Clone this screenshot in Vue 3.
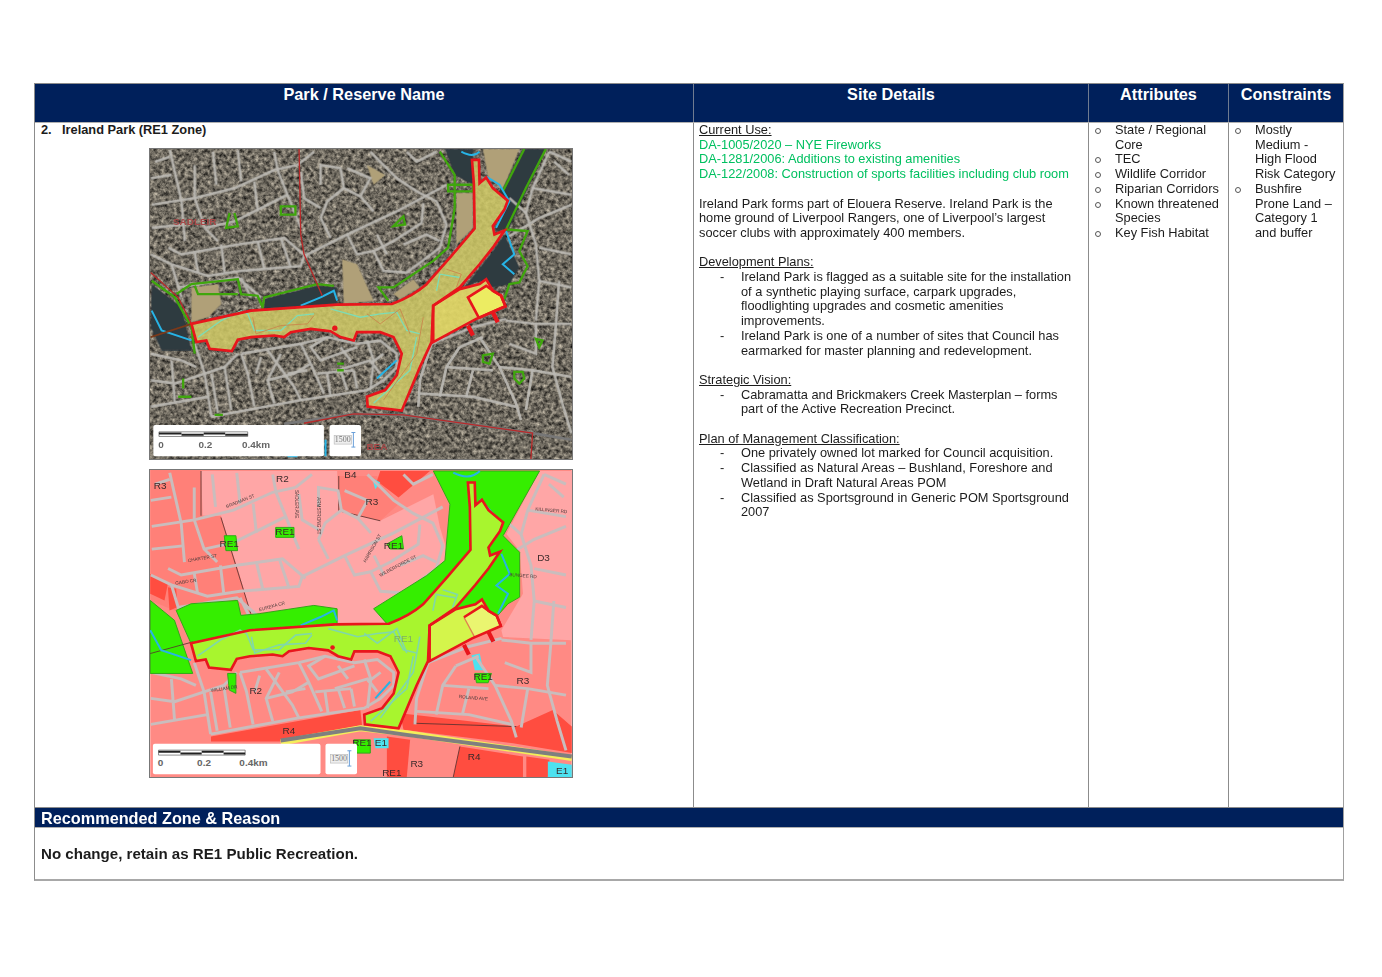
<script setup>
const siteBlocks = [
  {
    title: 'Development Plans:',
    items: [
      'Ireland Park is flagged as a suitable site for the installation of a synthetic playing surface, carpark upgrades, floodlighting upgrades and cosmetic amenities improvements.',
      'Ireland Park is one of a number of sites that Council has earmarked for master planning and redevelopment.'
    ]
  },
  {
    title: 'Strategic Vision:',
    items: ['Cabramatta and Brickmakers Creek Masterplan – forms part of the Active Recreation Precinct.']
  },
  {
    title: 'Plan of Management Classification:',
    items: [
      'One privately owned lot marked for Council acquisition.',
      'Classified as Natural Areas – Bushland, Foreshore and Wetland in Draft Natural Areas POM',
      'Classified as Sportsground in Generic POM Sportsground 2007'
    ]
  }
]

const attributes = ['State / Regional Core', 'TEC', 'Wildlife Corridor', 'Riparian Corridors', 'Known threatened Species', 'Key Fish Habitat']
const constraints = ['Mostly Medium - High Flood Risk Category', 'Bushfire Prone Land – Category 1 and buffer']

// road network, traced in map coordinates (3x page pixels)
const roads = [
  'M27 340L90 370L200 405L300 390L480 375L490 345',
  'M90 370L120 470M110 440L290 410L360 470M300 410L330 470',
  'M490 345L620 280L770 210L920 130',
  'M500 350L430 290L290 310L120 340L80 320',
  'M540 230L570 290M540 230L560 180L610 140L600 80L540 70L540 130',
  'M30 190L160 170L280 140L400 85L470 70',
  'M160 70L160 170L190 260L230 300M190 260L280 240L380 190L440 160',
  'M85 25L95 70L120 180L130 300M290 25L300 120',
  'M400 30L410 85L440 160L480 260',
  'M690 30L770 110L830 150L890 180L920 250L900 320L800 395L730 390L700 330L760 300L845 245L850 185',
  'M800 30L830 60L890 30M710 280L740 340M790 310L860 280L900 300',
  'M1110 285L1200 230L1297 190M1230 30L1180 140L1160 215L1190 310L1200 420L1190 540',
  'M1260 420L1250 560L1240 680L1270 790L1297 880',
  'M1100 540L1190 550L1297 550M875 610L1000 560L1100 535',
  'M875 610L840 720L835 800M1020 590L1080 680L1130 790L1145 840',
  'M1080 680L1180 690L1297 710M840 760L1000 770L1130 800M960 620L1030 590M920 680L1060 690',
  'M160 610L190 700L210 830M27 640L120 660L165 680',
  'M300 640L480 610L560 590L650 610L720 600L770 640L770 680L730 720L680 750L480 780L210 830',
  'M290 640L250 680L190 700M300 640L320 700L340 800',
  'M380 630L460 740L480 780M420 640L380 720L400 790',
  'M480 610L510 670L550 760M510 670L460 700L380 720',
  'M560 590L510 620L540 660L650 620',
  'M590 690L690 660L720 700M600 690L620 750M680 600L700 660L690 750',
  'M27 720L100 730L190 700M90 660L100 790M27 800L200 770',
  'M215 30L225 130M27 110L90 100M30 260L125 250M40 60L85 45',
  'M340 120L350 210M480 90L490 170L540 200M470 70L520 30',
  'M420 290L450 380M350 300L370 385M240 310L250 395M160 335L170 395',
  'M620 80L690 110L660 165L610 140M660 165L700 210M620 280L650 340L700 330',
  'M1245 60L1290 100M1180 140L1297 160M1160 215L1110 170M1200 320L1297 340M1200 420L1297 440',
  'M1110 610L1190 640L1190 550M1230 30L1297 60',
  'M960 620L920 680L900 770M1000 690L980 770M1180 690L1160 810',
  'M210 700L230 820M250 680L270 810M360 650L345 700M440 700L500 690M560 700L570 770',
  'M530 700L640 690M640 690L650 745M730 640L690 670M600 620L630 660'
]

const parkMain = 'M150 550L330 510L590 492L755 490Q820 465 860 430L935 345L1005 262L1003 130L997 55L1018 55L1020 125L1040 108L1060 140L1105 178L1095 205L1060 255L1065 280L1095 268L1060 320L1020 370L960 440L880 495L875 605L840 680L785 812L682 800L680 770L735 750L770 705L785 640L760 590L720 575L650 575L640 600L600 590L570 572L510 565L450 575L430 590L400 585L330 590L290 598L272 632L205 625L195 600L165 605Z'
const parkEast = 'M880 495L960 445L1020 430L1040 415L1060 450L1085 465L1098 497L1010 535L880 605Z'
const parkYellow = 'M985 470L1040 435L1060 450L1085 465L1098 497L1018 532Z'
const stubs = 'M985 555L1000 585M1060 515L1075 545'
const creekLines = 'M170 590L240 540L300 510L320 520L340 570L420 570L470 525L520 520M570 505L660 530L720 520L770 515L800 570L840 580M890 450L900 400L960 410M830 590L810 690L700 790'
const creekInner = 'M335 530L345 580L420 555L500 550L520 525M680 520L720 550L780 505L810 580M920 385L965 400L950 440M850 530L830 640L730 780'

const aerialFields = [
  'M1030 22L1140 22L1090 145L1045 105Z',
  'M950 155L1000 155L1000 260L950 310Z',
  'M150 440L230 430L240 490L200 530L150 545Z',
  'M605 355L650 370L700 480L610 490Z',
  'M760 460L820 415L840 440L780 475Z',
  'M680 70L735 100L700 130Z'
]
const aerialTrees = [
  'M915 22L1000 22L1000 130L945 100Z',
  'M1150 22L1220 22L1110 260L1065 270L1095 200L1105 175L1075 150L1090 140Z',
  'M1095 280L1140 380L1110 430L1060 440L1020 420L975 440L1060 330Z',
  'M30 430L120 500L150 630L60 630L27 560Z',
  'M370 475L530 435L590 440L590 490L370 505Z'
]
const aerialGreen = [
  'M900 30L945 100L945 200L925 320L880 360L760 440L715 440L745 480',
  'M1155 22L1090 150',
  'M1220 22L1160 140L1100 265L1165 270L1140 330L1165 375L1140 425L1110 430L1095 475',
  'M105 460L150 430L290 415L300 460L350 465L365 500L370 470L530 430L580 435',
  'M160 435L170 460L290 460',
  'M30 420L100 470L150 560L160 640',
  'M420 195H464V220H420Z',
  'M265 215L255 260L290 255L280 215',
  'M760 255L790 225L795 250Z',
  'M925 130H1000V150H925Z',
  'M1030 645L1060 640L1050 670L1030 665Z',
  'M1125 695H1150L1155 715L1140 730L1125 715Z',
  'M1190 595L1210 600L1200 620Z',
  'M590 670H610M590 690H610M110 770H150M125 715V745M220 825H245'
]
const aerialWater = 'M30 510L60 570L150 600M480 495L540 470L580 450L590 480M965 30Q1000 50 1020 30M1040 105L1080 130L1110 180L1070 260M1100 270L1125 340L1090 370L1125 400M710 715L770 660M440 950H470M555 900V950'

const salmonZones = [
  'M595 45H710L775 130L720 180L595 150Z',
  'M27 27H180V165H240L295 340L330 460L100 450L27 420Z'
]
const pinkZones = [
  'M180 30H590L595 150L720 180L880 100L900 200L930 300L880 350L700 445L745 490H590V445L525 435L330 460L295 340L240 170L185 165Z',
  'M1200 30H1297V540L1090 530L1085 510L1150 400L1140 270L1100 220Z'
]
const redZones = [
  'M720 30H870L775 110L710 60Z',
  'M27 340L80 370L70 420L27 400Z',
  'M80 380L105 385L110 440L85 450Z',
  'M210 830L660 750L665 795L420 845H210Z',
  'M780 760L1130 800L1240 750L1297 800V880L1120 850L790 810Z',
  'M740 830L810 840L800 952H740Z',
  'M960 860L1150 890V952H940Z',
  'M1160 890L1230 900L1225 952H1160Z'
]
const greenZones = [
  'M880 30H1200L1090 225L1140 275V410L1105 430L1070 470L945 445L800 490H740L700 445L860 345L915 300L930 130Z',
  'M105 450L150 430L290 420L300 465L355 460L520 435L590 445V495L150 550Z',
  'M27 420L100 480L155 640H27Z',
  'M405 200H460V230H405Z',
  'M250 225H285L290 270H255Z',
  'M260 640H285V700L265 690Z',
  'M740 250L785 225L790 265H750Z',
  'M640 840H690V880H650Z',
  'M1005 640H1055L1045 668H1010Z'
]
const zoneLabels = [
  { t: 'R3', x: 57, y: 85 }, { t: 'R2', x: 425, y: 62 }, { t: 'B4', x: 630, y: 52 },
  { t: 'R3', x: 695, y: 132 }, { t: 'RE1', x: 433, y: 222 }, { t: 'RE1', x: 265, y: 260 },
  { t: 'RE1', x: 760, y: 265 }, { t: 'R3', x: 1150, y: 672 }, { t: 'R3', x: 830, y: 922 },
  { t: 'R4', x: 445, y: 822 }, { t: 'R4', x: 1003, y: 900 }, { t: 'E1', x: 1268, y: 942 },
  { t: 'E1', x: 722, y: 860 }, { t: 'RE1', x: 665, y: 860 }, { t: 'RE1', x: 1030, y: 660 },
  { t: 'R2', x: 345, y: 702 }, { t: 'D3', x: 1212, y: 302 }, { t: 'RE1', x: 755, y: 948 }
]
const streetLabels = [
  { t: 'CHARTER ST', x: 185, y: 297, r: -10 }, { t: 'EUREKA CR', x: 395, y: 442, r: -15 },
  { t: 'WILBERFORCE ST', x: 775, y: 320, r: -28 }, { t: 'HARRISON ST', x: 700, y: 265, r: -60 },
  { t: 'BRADMAN ST', x: 300, y: 125, r: -22 }, { t: 'GABO CR', x: 135, y: 368, r: -8 },
  { t: 'KILLINGER RD', x: 1235, y: 153, r: 5 }, { t: 'BUNGEE RD', x: 1150, y: 350, r: 5 },
  { t: 'ROLAND AVE', x: 1000, y: 718, r: 5 }, { t: 'WILLIAM DR', x: 250, y: 690, r: -8 },
  { t: 'SADLER AVE', x: 462, y: 130, r: 90 }, { t: 'ARMSTRONG ST', x: 530, y: 165, r: 90 }
]
</script>

<template>
  <div class="page">
    <div class="sheet">
      <div class="head-row">
        <div class="head-cell">Park / Reserve Name</div>
        <div class="head-cell">Site Details</div>
        <div class="head-cell">Attributes</div>
        <div class="head-cell">Constraints</div>
      </div>

      <div class="body-row">
        <div class="cell park-cell">
          <div class="park-name"><span class="park-num">2.</span>Ireland Park (RE1 Zone)</div>
          <div class="maps">
            <svg class="map" viewBox="27 22 1270 936" width="424" height="312">
              <defs>
                <filter id="aerial" x="0" y="0" width="100%" height="100%" color-interpolation-filters="sRGB">
                  <feTurbulence type="fractalNoise" baseFrequency="0.085" numOctaves="3" seed="7" />
                  <feColorMatrix type="matrix" values="0.9 0 0 0 -0.02  0.86 0 0 0 -0.02  0.78 0 0 0 -0.02  0 0 0 0 1" />
                  <feGaussianBlur stdDeviation="2.2" />
                </filter>
                <filter id="soft"><feGaussianBlur stdDeviation="1.1" /></filter>
              </defs>
              <rect x="27" y="22" width="1270" height="936" filter="url(#aerial)" />
              <g filter="url(#soft)">
                <path v-for="d in aerialFields" :key="d" :d="d" fill="#b0a078" />
                <path v-for="d in aerialTrees" :key="d" :d="d" fill="#2f3a40" />
                <path v-for="d in roads" :key="d" :d="d" class="road-aerial" />
                <path d="M430 852L640 822L790 825L1180 880L1297 900" class="arterial-aerial" />
                <path v-for="d in aerialGreen" :key="d" :d="d" class="green-line" />
                <path :d="aerialWater" class="water" />
                <path :d="parkMain" class="park-aerial" />
                <path :d="parkEast" class="park-east-aerial" />
                <path :d="parkYellow" fill="#ecec62" />
                <path :d="creekLines" class="creek" />
                <path :d="creekInner" class="creek-inner" />
                <path d="M475 22L480 280L490 340L545 465M27 395L110 470L150 550M490 850L640 822L790 825L1180 880L1175 958" class="boundary" />
                <path d="M150 550L27 590" class="boundary-dark" />
                <path :d="parkMain" class="park-line" />
                <path :d="parkEast" class="park-line" />
                <path :d="parkYellow" class="park-line" />
                <path :d="stubs" class="stub" />
                <circle cx="583" cy="563" r="8" fill="#e8141c" />
                <text x="160" y="252" class="faded-label">SADLEIR</text>
                <text x="710" y="932" class="faded-label">BEA</text>
              </g>
              <rect x="35" y="855" width="515" height="95" rx="6" fill="#fff" />
              <rect x="567" y="855" width="95" height="95" rx="6" fill="#fff" />
              <path d="M52 876H320M52 876V890M320 876V890M52 890H320" class="scale-line" />
              <path d="M52 881H120M187 881H252" class="scale-bar" />
              <path d="M120 885H187M252 885H320" class="scale-bar" />
              <text x="58" y="924" class="scale-text">0</text>
              <text x="192" y="924" class="scale-text">0.2</text>
              <text x="345" y="924" class="scale-text">0.4km</text>
              <rect x="581" y="887" width="52" height="26" class="ratio-box" />
              <text x="607" y="908" class="ratio-text">1500</text>
              <path d="M633 878H645M639 878V922M633 922H645" class="ratio-mark" />
            </svg>

            <svg class="map" viewBox="27 27 1270 925" width="424" height="309">
              <defs>
                <filter id="soft2"><feGaussianBlur stdDeviation="1" /></filter>
              </defs>
              <rect x="27" y="27" width="1270" height="925" fill="#ff8a84" />
              <g filter="url(#soft2)">
                <path v-for="d in pinkZones" :key="d" :d="d" fill="#ffa6a6" />
                <path v-for="d in salmonZones" :key="d" :d="d" fill="#ff8078" />
                <path v-for="d in redZones" :key="d" :d="d" fill="#ff4d40" />
                <path d="M1225 905L1297 915V952H1225ZM695 50L720 65L705 85ZM995 585L1020 580L1030 630H1005ZM700 835H745V865H705Z" fill="#4de2f0" />
                <path d="M595 45V150L720 180M240 170L330 460M180 30V165M820 790L1130 800M960 860L940 952" class="zone-edge" />
                <g transform="matrix(.985 0 0 .978 2 11)">
                  <path v-for="d in roads" :key="d" :d="d" class="road-zone" />
                </g>
                <path d="M420 848L660 805L800 820L1297 895" class="yellow-edge" />
                <path d="M420 842L660 805L800 825L1297 890" class="arterial-zone" />
                <path v-for="d in greenZones" :key="d" :d="d" class="green-zone" />
                <path d="M155 545L27 580" class="zone-edge" />
                <path d="M27 510L60 570L150 600M480 495L540 470L580 450L590 480M940 35Q990 60 1020 30" class="water" />
                <path d="M1020 115L1070 170L1090 185L1040 270M1085 280L1110 340L1070 375L1105 400L1075 460M705 715L750 665M1005 440L980 445" class="water" />
                <g transform="matrix(.985 0 0 .978 2 11)">
                  <path :d="parkMain" fill="#a8f52f" />
                  <path :d="parkEast" fill="#d4f54c" />
                  <path :d="parkYellow" fill="#eaf56f" />
                  <path :d="creekLines" class="creek-zone" />
                  <path :d="creekInner" class="creek-zone" />
                  <path d="M985 470L1018 532" class="split-line" />
                  <path :d="parkMain" class="park-line" />
                  <path :d="parkEast" class="park-line" />
                  <path d="M985 470L1040 435L1060 450L1085 465L1098 497" class="park-line" />
                  <path :d="stubs" class="stub" />
                  <circle cx="583" cy="563" r="7" fill="#e8141c" />
                </g>
                <text v-for="s in streetLabels" :key="s.t" :transform="`translate(${s.x} ${s.y}) rotate(${s.r})`" class="street-label">{{ s.t }}</text>
                <text v-for="z in zoneLabels" :key="z.t + z.x" :x="z.x" :y="z.y" class="zone-label">{{ z.t }}</text>
                <text x="790" y="546" class="zone-label park-label">RE1</text>
              </g>
              <rect x="35" y="852" width="505" height="92" rx="6" fill="#fff" />
              <rect x="555" y="852" width="95" height="92" rx="6" fill="#fff" />
              <path d="M52 871H313M52 871V886M313 871V886M52 886H313" class="scale-line" />
              <path d="M52 876H118M182 876H248" class="scale-bar" />
              <path d="M118 881H182M248 881H313" class="scale-bar" />
              <text x="58" y="918" class="scale-text">0</text>
              <text x="189" y="918" class="scale-text">0.2</text>
              <text x="338" y="918" class="scale-text">0.4km</text>
              <rect x="570" y="884" width="52" height="26" class="ratio-box" />
              <text x="596" y="905" class="ratio-text">1500</text>
              <path d="M621 873H633M627 873V919M621 919H633" class="ratio-mark" />
            </svg>
          </div>
        </div>

        <div class="cell site-cell">
          <div class="block">
            <div class="sub">Current Use:</div>
            <div class="da">DA-1005/2020 – NYE Fireworks</div>
            <div class="da">DA-1281/2006: Additions to existing amenities</div>
            <div class="da">DA-122/2008: Construction of sports facilities including club room</div>
          </div>
          <p class="block">Ireland Park forms part of Elouera Reserve. Ireland Park is the home ground of Liverpool Rangers, one of Liverpool’s largest soccer clubs with approximately 400 members.</p>
          <div v-for="b in siteBlocks" :key="b.title" class="block">
            <div class="sub">{{ b.title }}</div>
            <ul class="dash-list">
              <li v-for="item in b.items" :key="item">{{ item }}</li>
            </ul>
          </div>
        </div>

        <div class="cell list-cell">
          <ul class="ring-list">
            <li v-for="a in attributes" :key="a">{{ a }}</li>
          </ul>
        </div>

        <div class="cell list-cell">
          <ul class="ring-list">
            <li v-for="c in constraints" :key="c">{{ c }}</li>
          </ul>
        </div>
      </div>

      <div class="band">Recommended Zone &amp; Reason</div>
      <div class="outcome">No change, retain as RE1 Public Recreation.</div>
    </div>
  </div>
</template>

<style scoped>
.page {
  padding: 83px 38px 0 34px;
  font-family: "Liberation Sans", Arial, sans-serif;
  color: #1c1c1c;
}

.sheet {
  width: 1310px;
  box-sizing: border-box;
  border: 1px solid #8c8c8c;
  border-right-color: #a0a0a0;
  border-bottom: 2px solid #a8a8a8;
}

.head-row,
.body-row {
  display: grid;
  grid-template-columns: 658px 395px 140px 115px;
}

.head-row {
  height: 38px;
  background: #00205b;
}

.head-cell {
  color: #fff;
  font-size: 16.3px;
  font-weight: bold;
  text-align: center;
  line-height: 20px;
  border-left: 1px solid #6f7b90;
}

.head-cell:first-child {
  border-left: none;
}

.body-row {
  height: 684px;
  border-top: 1px solid #b0b0b0;
}

.cell {
  border-left: 1px solid #8c8c8c;
  font-size: 12.8px;
  line-height: 14.7px;
}

.cell:first-child {
  border-left: none;
}

.park-cell {
  padding: 0 6px;
}

.park-name {
  font-weight: bold;
  display: flex;
  height: 25px;
}

.park-num {
  width: 21px;
}

.maps {
  display: flex;
  flex-direction: column;
  gap: 9px;
  margin-left: 108px;
}

.map {
  display: block;
  box-sizing: border-box;
  border: 1px solid #777;
}

.site-cell {
  padding: 0 10px 0 5px;
}

.block {
  margin: 0 0 14.7px;
}

.sub {
  text-decoration: underline;
}

.da {
  color: #00c060;
}

.dash-list,
.ring-list {
  list-style: none;
  margin: 0;
  padding: 0;
}

.dash-list li {
  position: relative;
  padding-left: 42px;
}

.dash-list li::before {
  content: "-";
  position: absolute;
  left: 21px;
}

.list-cell {
  padding: 0 7px 0 6px;
}

.ring-list li {
  position: relative;
  padding-left: 20px;
}

.ring-list li::before {
  content: "";
  position: absolute;
  left: 0;
  top: 5px;
  width: 4px;
  height: 4px;
  border: 1px solid #555;
  border-radius: 50%;
}

.band {
  background: #00205b;
  color: #fff;
  font-size: 16.25px;
  font-weight: bold;
  line-height: 20px;
  height: 19px;
  padding-left: 6px;
  border-top: 1px solid #8c8c8c;
}

.outcome {
  height: 52px;
  box-sizing: border-box;
  padding: 17px 0 0 6px;
  font-size: 15.1px;
  font-weight: bold;
  line-height: 18px;
  border-top: 1px solid #b0b0b0;
}

/* map strokes */
.road-aerial {
  fill: none;
  stroke: #bdbab5;
  stroke-width: 8;
  opacity: 0.9;
}

.road-zone {
  fill: none;
  stroke: #c9bdbd;
  stroke-width: 9;
}

.arterial-aerial {
  fill: none;
  stroke: #777;
  stroke-width: 8;
}

.arterial-zone {
  fill: none;
  stroke: #7f7f7f;
  stroke-width: 12;
}

.yellow-edge {
  fill: none;
  stroke: #f4ee5a;
  stroke-width: 18;
}

.green-line {
  fill: none;
  stroke: #3fa60e;
  stroke-width: 7;
}

.green-zone {
  fill: #36ee00;
  stroke: #2fa818;
  stroke-width: 3;
}

.water {
  fill: none;
  stroke: #28b4e6;
  stroke-width: 6;
}

.park-aerial {
  fill: #d0ca64;
  fill-opacity: 0.85;
}

.park-east-aerial {
  fill: #e2d866;
  fill-opacity: 0.92;
}

.creek {
  fill: none;
  stroke: #7fdcb4;
  stroke-width: 4;
}

.creek-inner {
  fill: none;
  stroke: #c88c50;
  stroke-width: 3;
}

.creek-zone {
  fill: none;
  stroke: #80d8a8;
  stroke-width: 5;
}

.split-line {
  fill: none;
  stroke: #e08050;
  stroke-width: 4;
}

.boundary {
  fill: none;
  stroke: #b82a2a;
  stroke-width: 4;
}

.boundary-dark {
  fill: none;
  stroke: #7a3a1a;
  stroke-width: 5;
}

.park-line {
  fill: none;
  stroke: #e8141c;
  stroke-width: 8;
}

.stub {
  fill: none;
  stroke: #e8141c;
  stroke-width: 13;
}

.zone-edge {
  fill: none;
  stroke: #57302e;
  stroke-width: 2.5;
}

.faded-label {
  font-size: 30px;
  font-weight: bold;
  fill: #a84848;
  text-anchor: middle;
}

.zone-label {
  font-size: 30px;
  fill: #3a2a2a;
  text-anchor: middle;
}

.park-label {
  fill: #7fb060;
}

.street-label {
  font-size: 14px;
  fill: #4a3a3a;
  text-anchor: middle;
}

.scale-line {
  fill: none;
  stroke: #555;
  stroke-width: 2;
}

.scale-bar {
  fill: none;
  stroke: #222;
  stroke-width: 6;
}

.scale-text {
  font-size: 30px;
  font-weight: bold;
  fill: #666;
  text-anchor: middle;
}

.ratio-box {
  fill: #eee;
  stroke: #bbb;
  stroke-width: 2;
}

.ratio-text {
  font-family: "Liberation Serif", serif;
  font-size: 24px;
  fill: #777;
  text-anchor: middle;
}

.ratio-mark {
  fill: none;
  stroke: #6a9fd8;
  stroke-width: 3;
}
</style>
